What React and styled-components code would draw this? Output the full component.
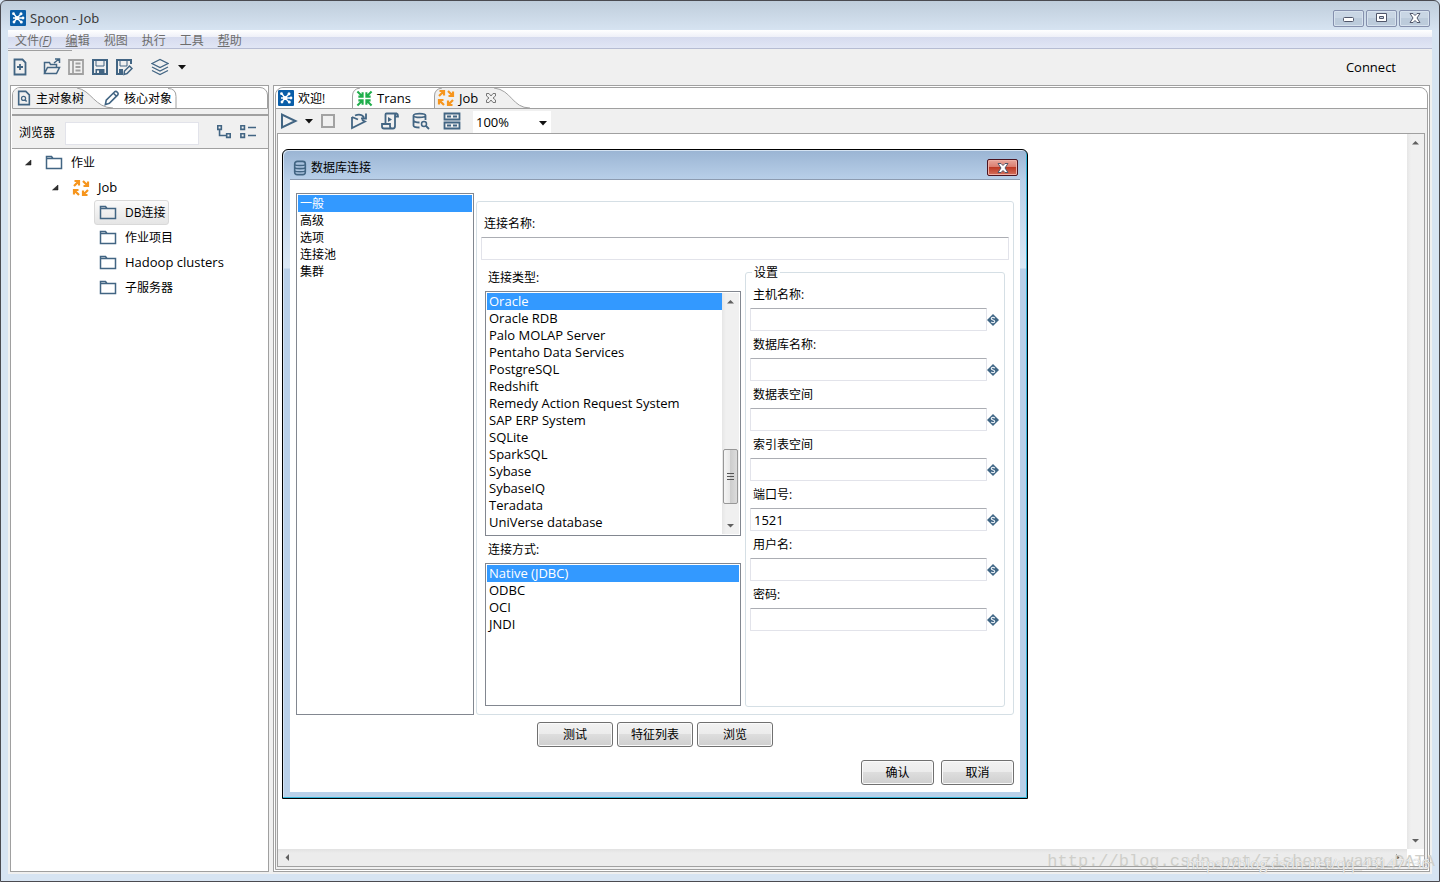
import { useState } from "react"
import styled, { createGlobalStyle, css } from "styled-components"

const GlobalStyle = createGlobalStyle`
    * {
        box-sizing: border-box;
    }

    body {
        margin: 0;
        font-family: "Open Sans", "Noto Sans CJK SC", sans-serif;
        font-size: 12px;
        line-height: 17px;
        color: #000;
        background: #d7e4f2;
    }

    button, input, select {
        font: inherit;
        color: inherit;
    }

    svg {
        display: block;
        flex: none;
    }
`

/* ---------- main window ---------- */

const Window = styled.div`
    position: relative;
    display: flex;
    flex-direction: column;
    min-height: 100vh;
    padding: 0 7px 7px;
    border: 1px solid #4a4a50;
    border-radius: 6px 6px 0 0;
    background: linear-gradient(#bfcddb, #d7e4f2 30px);
    overflow: hidden;
`

const TitleBar = styled.header`
    display: flex;
    align-items: center;
    gap: 4px;
    height: 29px;
    padding: 5px 2px 0;
    color: #3c3c3c;
`

const TitleText = styled.h1`
    flex: 1;
    margin: 0;
    font-family: "Noto Sans", sans-serif;
    font-size: 13px;
    font-weight: normal;
`

const WindowButtons = styled.div`
    display: flex;
    gap: 2px;
`

const WindowButton = styled.button`
    display: flex;
    align-items: center;
    justify-content: center;
    width: 31px;
    height: 17px;
    padding: 0;
    border: 1px solid #8590ad;
    border-radius: 2px;
    background: linear-gradient(#c9d6e4 50%, #bccbdb 50%);
    box-shadow: inset 0 0 0 1px #d7e2ee;
`

const MenuBar = styled.nav`
    display: flex;
    gap: 14px;
    height: 19px;
    padding: 2px 7px 0;
    border-bottom: 1px solid #b6bcd2;
    background: linear-gradient(#fff, #eef0f8 7px, #d6dbee 7px, #e1e6f5);
`

const MenuLink = styled.a`
    color: #6d6d6d;
    text-decoration: none;
`

const Body = styled.div`
    flex: 1;
    display: flex;
    flex-direction: column;
    padding: 0 2px 2px;
    background: #f0f0f0;
`

const Toolbar = styled.div`
    display: flex;
    align-items: center;
    height: 36px;
    margin-left: -2px;
    background: linear-gradient(#a0a0a0, #a0a0a0) 0 1px / 64px 1px no-repeat;
`

const ToolButton = styled.button`
    display: flex;
    align-items: center;
    justify-content: center;
    width: ${props => props.$width || 24}px;
    height: 24px;
    margin: 0 0 0 ${props => props.$space || 0}px;
    padding: 0;
    border: none;
    background: none;
`

const ConnectLink = styled.a`
    margin-left: auto;
    margin-right: 34px;
    font-size: 13px;
    color: #000;
    text-decoration: none;
`

const Main = styled.main`
    flex: 1;
    display: flex;
    gap: 4px;
`

/* ---------- tab folders ---------- */

const Panel = styled.section`
    display: flex;
    flex-direction: column;
    border: 1px solid #a0a0a0;
    background: #fff;
    ${props => props.$side ? css`
        flex: none;
        width: 259px;
    ` : css`
        flex: 1;
        min-width: 0;
        padding: 1px;
    `}
`

const Folder = styled.div`
    flex: 1;
    display: flex;
    flex-direction: column;
    padding: 0 2px 2px 1px;
    border: 1px solid #a0a0a0;
    border-radius: 8px 8px 0 0;
    background: #f0f0f0;
`

const TabStrip = styled.div`
    position: relative;
    display: flex;
    height: 21px;
    background: #fff;
    border-bottom: 1px solid #a0a0a0;
    overflow: hidden;
    ${props => props.$side ? css`
        height: 22px;
        margin: 1px 0 0 1px;
        border: 1px solid #a0a0a0;
        border-radius: 8px 8px 0 0;
    ` : css`
        margin: 0 -2px 0 -1px;
        border-radius: 8px 8px 0 0;
    `}
`

const Tab = styled.button`
    position: relative;
    display: flex;
    align-items: center;
    gap: 4px;
    width: ${props => props.$width}px;
    padding: 0 0 0 ${props => props.$inset || 3}px;
    border: none;
    background: none;
    white-space: nowrap;
    font-size: ${props => props.$latin ? 13 : 12}px;
`

const TabShape = styled.svg`
    position: absolute;
    left: 0;
    top: 0;
`

const TabLabel = styled.span`
    position: relative;
    display: flex;
    align-items: center;
    gap: 4px;
`

/* ---------- object tree ---------- */

const Band = styled.div`
    height: 7px;
    margin-left: 1px;
    border-bottom: 2px solid #a0a0a0;
    background: #f0f0f0;
`

const SearchBar = styled.div`
    display: flex;
    align-items: center;
    height: 33px;
    margin-left: 1px;
    padding-left: 7px;
    border-bottom: 1px solid #a0a0a0;
    background: #f0f0f0;
`

const SearchInput = styled.input`
    width: 134px;
    height: 23px;
    margin: 2px 13px 0 10px;
    padding: 0 4px;
    border: 1px solid #e2e3ea;
    background: #fff;
`

const Tree = styled.ul`
    list-style: none;
    margin: 0;
    padding: 1px 0 0;
`

const TreeRow = styled.li`
    display: flex;
    align-items: center;
    height: 25px;
    padding-left: ${props => 13 + props.$level * 27}px;
`

const TreeArrow = styled.span`
    width: 16px;
`

const TreeItem = styled.button`
    display: flex;
    align-items: center;
    gap: 8px;
    height: 25px;
    padding: 0 3px 0 4px;
    border: 1px solid transparent;
    border-radius: 3px;
    background: none;
    font-size: ${props => props.$latin ? 13 : 12}px;
    ${props => props.$selected && css`
        border-color: #d9d9d9;
        background: linear-gradient(#fafafa, #e5e5e5);
    `}
`

/* ---------- job editor ---------- */

const EditorBar = styled.div`
    display: flex;
    align-items: center;
    height: 24px;
`

const Zoom = styled.div`
    position: relative;
    align-self: flex-end;
    margin-left: 6px;

    svg {
        position: absolute;
        right: 4px;
        top: 10px;
        pointer-events: none;
    }
`

const ZoomSelect = styled.select`
    display: block;
    appearance: none;
    width: 78px;
    height: 22px;
    padding: 0 3px;
    border: none;
    border-radius: 0;
    background: #fff;
    font-size: 13px;
`

const Canvas = styled.div`
    flex: 1;
    display: grid;
    grid-template: 1fr 17px / 1fr 17px;
    border: 1px solid #a0a0a0;
    background: #fff;
`

const ScrollTrack = styled.div`
    display: flex;
    flex-direction: ${props => props.$vertical ? "column" : "row"};
    align-items: center;
    justify-content: space-between;
    padding: ${props => props.$vertical ? "5px 0" : "0 6px"};
    background: ${props => props.$vertical ? "linear-gradient(90deg, #e6e6e6, #f0f0f0 4px)" : "linear-gradient(#e2e2e2, #ececec 4px)"};
`

const Drawing = styled.div`
    min-width: 0;
`

const Watermark = styled.p`
    position: absolute;
    right: ${props => props.$front ? 9 : 4}px;
    bottom: 9px;
    margin: 0;
    white-space: nowrap;
    pointer-events: none;
    ${props => props.$front ? css`
        font-size: 15px;
        line-height: 18px;
        color: rgba(255, 255, 255, 0.8);
        text-shadow: 0 0 1px #999;
    ` : css`
        font-family: "Liberation Mono", monospace;
        font-size: 17px;
        line-height: 20px;
        color: #cfcfca;
    `}
`

/* ---------- database dialog ---------- */

const Dialog = styled.div`
    position: absolute;
    left: 281px;
    top: 148px;
    width: 746px;
    height: 650px;
    display: flex;
    flex-direction: column;
    padding: 0 6px 6px;
    border: 1px solid #000;
    border-radius: 6px 6px 0 0;
    background: linear-gradient(#9ab4d3, #b9d0e9 30px, #dbe8f5 118px, #b9d0e9 119px);
    box-shadow: inset -1px -1px 0 #35b5d9, inset 1px 1px 0 #d5e3f2;
`

const DialogHeader = styled.div`
    display: flex;
    align-items: center;
    gap: 3px;
    height: 29px;
    padding: 6px 3px 0;
`

const DialogTitle = styled.h2`
    flex: 1;
    margin: 0;
    font-size: 12px;
    font-weight: normal;
`

const CloseButton = styled(WindowButton)`
    border-color: #4b1420;
    background: linear-gradient(#e8a79c, #d9796b 50%, #bd3a25 50%, #d4705c);
    box-shadow: inset 0 0 0 1px #eeb0a6;
`

const DialogBody = styled.div`
    flex: 1;
    padding: 13px 6px 6px;
    border-top: 1px solid #8c9bb0;
    margin: 0 1px;
    background: #fff;
`

const Columns = styled.div`
    display: grid;
    grid-template-columns: 178px 1fr;
    gap: 2px;
    height: 522px;
`

const ListFrame = styled.div`
    display: flex;
    min-height: 0;
    height: ${props => props.$height ? props.$height + "px" : "auto"};
    padding: 1px;
    border: 1px solid #828790;
    background: #fff;
`

const List = styled.ul`
    flex: 1;
    list-style: none;
    margin: 0;
    padding: 0;
    font-size: ${props => props.$latin ? 13 : 12}px;
    overflow: hidden;
`

const Option = styled.li`
    height: 17px;
    padding-left: 2px;
    cursor: default;
    ${props => props.$selected && css`
        color: #fff;
        background: #3399ff;
    `}
`

const ListScroll = styled(ScrollTrack)`
    width: 17px;
`

const Thumb = styled.div`
    flex: none;
    display: flex;
    align-items: center;
    justify-content: center;
    width: 15px;
    height: 55px;
    margin-top: 126px;
    border: 1px solid #979797;
    border-radius: 2px;
    background: linear-gradient(90deg, #f5f5f5, #e6e6e6 50%, #cdcdcd 50%, #dcdcdc);
`

const Group = styled.div`
    margin-top: 8px;
    padding: 13px 4px 0;
    border: 1px solid #d5dfe5;
    border-radius: 3px;
`

const FieldLabel = styled.label`
    display: block;
    padding: 0 3px;
`

const TextInput = styled.input`
    display: block;
    width: 100%;
    height: 23px;
    padding: 0 3px;
    border: 1px solid #e2e3ea;
    border-top-color: #abadb3;
    border-radius: 1px;
    background: #fff;
    font-size: 13px;
`

const NameField = styled.div`
    display: grid;
    gap: 5px;
`

const Split = styled.div`
    display: grid;
    grid-template-columns: 256px 260px;
    gap: 4px;
    padding: 9px 4px 0;
`

const Choices = styled.div`
    display: flex;
    flex-direction: column;
    gap: 5px;
`

const Settings = styled.fieldset`
    min-width: 0;
    height: 443px;
    margin: -5px 0 0;
    padding: 5px 5px 0 4px;
    border: 1px solid #d5dfe5;
    border-radius: 3px;
`

const Legend = styled.legend`
    margin-left: 2px;
    padding: 0 2px;
`

const SettingRow = styled.div`
    display: grid;
    gap: 5px;
    height: 50px;
    align-content: start;
`

const VariableField = styled.div`
    display: flex;
    align-items: center;
`

const ButtonRow = styled.div`
    display: flex;
    justify-content: ${props => props.$end ? "flex-end" : "center"};
    gap: ${props => props.$end ? 7 : 4}px;
    margin-top: ${props => props.$end ? 13 : 7}px;
`

const PushButton = styled.button`
    width: ${props => props.$narrow ? 73 : 76}px;
    height: 25px;
    padding: 0;
    border: 1px solid #707070;
    border-radius: 3px;
    background: linear-gradient(#f2f2f2, #ebebeb 50%, #dddddd 50%, #cfcfcf);
    box-shadow: inset 0 0 0 1px #fafafa;
`

/* ---------- icons ---------- */

const BLUE = "#426583"

const Icon = ({ size = 18, color = BLUE, width = 1.8, children }) => (
    <svg width={size} height={size} viewBox="0 0 18 18" fill="none" stroke={color} strokeWidth={width} aria-hidden="true">
        {children}
    </svg>
)

const SpoonIcon = () => (
    <svg width="16" height="16" viewBox="0 0 16 16" aria-hidden="true">
        <rect width="16" height="16" rx="1" fill="#0a5ea8" />
        <g stroke="#fff" strokeWidth="1.4" fill="#fff">
            <path d="M7 8 4 4M7 8l4-4M7 8h6M7 8l4 4M7 8l-3 4M7 8H3" />
            <circle cx="3.5" cy="3.7" r=".7" />
            <circle cx="11" cy="3.8" r=".8" />
            <circle cx="13" cy="8" r=".7" />
            <circle cx="11.3" cy="12" r=".8" />
            <circle cx="4" cy="12" r=".7" />
            <circle cx="7" cy="8" r="1.3" />
        </g>
    </svg>
)

const Caret = () => (
    <svg width="8" height="5" viewBox="0 0 8 5" aria-hidden="true"><path d="M0 0h8L4 4.500z" fill="#111" /></svg>
)

const FolderIcon = () => (
    <Icon width={1.5}><path d="M1.500 14.500v-12h5l1.500 2h8.500v10zM2 4.500h6" /></Icon>
)

const JobIcon = () => (
    <Icon color="#f6951d" width={2.2}>
        <path d="M2 7l5-5M2.500 2H7v4.500M11 2l5 5M16 2.500V7h-4.500M16 11l-5 5M11 11.500V16h4.500M7 16l-5-5M6.500 11H2v4.500" />
    </Icon>
)

const TransIcon = () => (
    <Icon size={17} color="#1fae4b" width={2.2}>
        <path d="M1.500 1.500L7 7M7 2.500V7H2.500M16.500 1.500L11 7M11 2.500V7h4.500M1.500 16.500L7 11M2.500 11H7v4.500M16.500 16.500L11 11M15.500 11H11v4.500" />
    </Icon>
)

const DatabaseIcon = () => (
    <Icon size={16}>
        <rect x="3" y="1.500" width="12" height="15" rx="3" />
        <path d="M3 5.500c2 1 10 1 12 0M3 9c2 1 10 1 12 0M3 12.500c2 1 10 1 12 0" />
    </Icon>
)

const VariableIcon = () => (
    <svg width="12" height="12" viewBox="0 0 12 12" aria-hidden="true">
        <path d="M6 0l6 6-6 6-6-6z" fill="#3f6685" />
        <path d="M7.800 4.300C7 3 4.300 3.200 4.300 4.700S7.700 5.800 7.700 7.400 5 9 4.200 7.800" fill="none" stroke="#e6edf3" strokeWidth="1.200" />
    </svg>
)

const CloseGlyph = () => (
    <svg width="12" height="10" viewBox="0 0 12 10" aria-hidden="true">
        <path d="M1 .5h3l2 2 2-2h3L8 5l3 4.500H8l-2-2-2 2H1L4 5z" fill="#fff" stroke="#50566a" />
    </svg>
)

const Triangle = ({ points }) => (
    <svg width="7" height="7" viewBox="0 0 7 7" aria-hidden="true"><path d={points} fill="#606060" /></svg>
)

const UP = "M0 5.500h7L3.500 2z"
const DOWN = "M0 2h7L3.500 5.500z"
const LEFT = "M5 0v7L1.500 3.500z"
const RIGHT = "M2 0v7l3.500-3.500z"

const Expanded = () => (
    <svg width="8" height="8" viewBox="0 0 8 8" aria-hidden="true"><path d="M7 1v5H1.500z" fill="#333" stroke="#111" strokeWidth=".5" /></svg>
)

/* ---------- data ---------- */

const sections = ["一般", "高级", "选项", "连接池", "集群"]

const databases = [
    "Oracle", "Oracle RDB", "Palo MOLAP Server", "Pentaho Data Services", "PostgreSQL",
    "Redshift", "Remedy Action Request System", "SAP ERP System", "SQLite", "SparkSQL",
    "Sybase", "SybaseIQ", "Teradata", "UniVerse database",
]

const accessTypes = ["Native (JDBC)", "ODBC", "OCI", "JNDI"]

const settings = [
    { id: "host", label: "主机名称:" },
    { id: "database", label: "数据库名称:" },
    { id: "dataSpace", label: "数据表空间" },
    { id: "indexSpace", label: "索引表空间" },
    { id: "port", label: "端口号:", value: "1521" },
    { id: "user", label: "用户名:" },
    { id: "password", label: "密码:", type: "password" },
]

const treeItems = [
    { label: "作业", level: 0, open: true },
    { label: "Job", level: 1, open: true, icon: <JobIcon />, latin: true },
    { label: "DB连接", level: 2 },
    { label: "作业项目", level: 2 },
    { label: "Hadoop clusters", level: 2, latin: true },
    { label: "子服务器", level: 2 },
]

function ListBox({ label, items, latin, height, children }) {
    const [selected, setSelected] = useState(items[0])

    return (
        <ListFrame $height={height}>
            <List role="listbox" aria-label={label} $latin={latin}>
                {items.map(item => (
                    <Option
                        key={item}
                        role="option"
                        aria-selected={item === selected}
                        $selected={item === selected}
                        onClick={() => setSelected(item)}
                    >
                        {item}
                    </Option>
                ))}
            </List>
            {children}
        </ListFrame>
    )
}

function ObjectTree() {
    const [selected, setSelected] = useState("DB连接")

    return (
        <Panel $side>
            <TabStrip $side role="tablist">
                <Tab role="tab" aria-selected="true" $width={88}>
                    <TabShape width="110" height="21">
                        <path d="M0 21V0h64c14 2 18 20 36 20v1z" fill="#f0f0f0" />
                        <path d="M64 0c14 2 18 20 36 20" fill="none" stroke="#a0a0a0" />
                    </TabShape>
                    <TabLabel>
                        <Icon size={16}>
                            <path d="M3 1.500h8l4 4v11H3z" />
                            <circle cx="8.500" cy="9.500" r="2.300" strokeWidth="1.400" /><path d="M10 11l2 2" />
                        </Icon>
                        主对象树
                    </TabLabel>
                </Tab>
                <Tab role="tab" aria-selected="false" $width={76}>
                    <TabShape width="76" height="21">
                        <path d="M67 .5q8 0 8 8V21" fill="none" stroke="#a0a0a0" />
                    </TabShape>
                    <TabLabel>
                        <Icon size={16}><path d="M1.500 16.500l1-5L12 2q1.500-1 3 .5t.5 3L6 15zM11 4l3 3" /></Icon>
                        核心对象
                    </TabLabel>
                </Tab>
            </TabStrip>
            <Band />
            <SearchBar>
                <label htmlFor="browse">浏览器</label>
                <SearchInput id="browse" />
                <ToolButton aria-label="展开">
                    <Icon size={16}><path d="M2 2h4v4H2zM12 11h4v4h-4zM4 6v7h8" /></Icon>
                </ToolButton>
                <ToolButton aria-label="折叠">
                    <Icon size={16}><path d="M1 2h4v4H1zM1 11h4v4H1zM9 4h9M9 13h9" /></Icon>
                </ToolButton>
            </SearchBar>
            <Tree>
                {treeItems.map(item => (
                    <TreeRow key={item.label} $level={item.level}>
                        <TreeArrow>{item.open && <Expanded />}</TreeArrow>
                        <TreeItem
                            $latin={item.latin}
                            $selected={item.label === selected}
                            onClick={() => setSelected(item.label)}
                        >
                            {item.icon || <FolderIcon />}
                            {item.label}
                        </TreeItem>
                    </TreeRow>
                ))}
            </Tree>
        </Panel>
    )
}

function Editor() {
    return (
        <Panel>
            <Folder>
                <TabStrip role="tablist">
                    <Tab role="tab" aria-selected="false" $width={76} $inset={2}>
                        <SpoonIcon />欢迎!
                    </Tab>
                    <Tab role="tab" aria-selected="false" $width={82} $inset={4} $latin>
                        <TabShape width="10" height="21"><path d="M.5 21V8Q.5 1 8 0" fill="none" stroke="#a0a0a0" /></TabShape>
                        <TabLabel><TransIcon />Trans</TabLabel>
                    </Tab>
                    <Tab role="tab" aria-selected="true" $width={96} $inset={3} $latin>
                        <TabShape width="96" height="21">
                            <path d="M0 21V8Q0 0 8 0h52c18 2 18 20 36 20v1z" fill="#f0f0f0" />
                            <path d="M.5 21V8Q.5 1 8 0M60 0c18 2 18 20 36 20" fill="none" stroke="#a0a0a0" />
                        </TabShape>
                        <TabLabel>
                            <JobIcon />Job
                            <Icon size={18} color="#777" width={1}>
                                <path d="M4.500 4.500h2.500l2 2.500 2-2.500h2.500v2.500L11 9l2.500 2v2.500H11L9 11l-2 2.500H4.500V11L7 9 4.500 7z" />
                            </Icon>
                        </TabLabel>
                    </Tab>
                </TabStrip>
                <EditorBar>
                    <ToolButton aria-label="运行"><Icon width={2}><path d="M2 2.500v13L15.500 9z" /></Icon></ToolButton>
                    <ToolButton aria-label="运行选项" $width={16}><Caret /></ToolButton>
                    <ToolButton aria-label="停止" $width={22}><Icon color="#a2a2a2" width={2}><path d="M3 3h12v12H3z" /></Icon></ToolButton>
                    <ToolButton aria-label="重放" $width={31} $space={4}>
                        <Icon><path d="M2 5v11l13-6.500-3-1.500M2 5l6 2.500M5 3.500q6-2.500 9 2M16 1.500v5h-5" /></Icon>
                    </ToolButton>
                    <ToolButton aria-label="SQL" $width={31}>
                        <Icon>
                            <path d="M4.500 11V2.500q0-1 1-1H16q-2 0-2 2V14q0 2.500-2 2.500H3q-2 0-2-2V12h8v2q0 2.500 2 2.500M16 1.500q1 .5 1 3h-3" />
                            <path d="M7 5l4 2.500L7 10z" fill={BLUE} stroke="none" />
                        </Icon>
                    </ToolButton>
                    <ToolButton aria-label="探测数据库" $width={31}>
                        <Icon>
                            <path d="M1.500 3.500c0-2.500 12-2.500 12 0s-12 2.500-12 0v10q0 2 6 2M13.500 3.500V8M1.500 8.500q1 2 6 2" />
                            <circle cx="12" cy="12" r="2.500" strokeWidth="1.500" /><path d="M14 14l3 3" />
                        </Icon>
                    </ToolButton>
                    <ToolButton aria-label="显示结果" $width={31}>
                        <Icon><path d="M1.500 1.500h15v6h-15zM1.500 10.500h15v6h-15zM4 4.500h4M10 4.500h4M4 13.500h4M10 13.500h4" /></Icon>
                    </ToolButton>
                    <Zoom>
                        <ZoomSelect aria-label="缩放" defaultValue="100%">
                            <option>100%</option>
                        </ZoomSelect>
                        <Caret />
                    </Zoom>
                </EditorBar>
                <Canvas>
                    <Drawing />
                    <ScrollTrack $vertical><Triangle points={UP} /><Triangle points={DOWN} /></ScrollTrack>
                    <ScrollTrack><Triangle points={LEFT} /><Triangle points={RIGHT} /></ScrollTrack>
                </Canvas>
            </Folder>
        </Panel>
    )
}

function DatabaseDialog() {
    return (
        <Dialog role="dialog" aria-labelledby="dialog-title">
            <DialogHeader>
                <DatabaseIcon />
                <DialogTitle id="dialog-title">数据库连接</DialogTitle>
                <CloseButton aria-label="关闭"><CloseGlyph /></CloseButton>
            </DialogHeader>
            <DialogBody>
                <Columns>
                    <ListBox label="分类" items={sections} />
                    <Group>
                        <NameField>
                            <FieldLabel htmlFor="name">连接名称:</FieldLabel>
                            <TextInput id="name" />
                        </NameField>
                        <Split>
                            <Choices>
                                <FieldLabel as="span">连接类型:</FieldLabel>
                                <ListBox label="连接类型" items={databases} height={245} latin>
                                    <ListScroll $vertical>
                                        <Triangle points={UP} />
                                        <Thumb>
                                            <svg width="7" height="8" aria-hidden="true"><path d="M0 .5h7M0 3.500h7M0 6.500h7" stroke="#555" /></svg>
                                        </Thumb>
                                        <Triangle points={DOWN} />
                                    </ListScroll>
                                </ListBox>
                                <FieldLabel as="span">连接方式:</FieldLabel>
                                <ListBox label="连接方式" items={accessTypes} height={143} latin />
                            </Choices>
                            <Settings>
                                <Legend>设置</Legend>
                                {settings.map(field => (
                                    <SettingRow key={field.id}>
                                        <FieldLabel htmlFor={field.id}>{field.label}</FieldLabel>
                                        <VariableField>
                                            <TextInput id={field.id} type={field.type || "text"} defaultValue={field.value} />
                                            <VariableIcon />
                                        </VariableField>
                                    </SettingRow>
                                ))}
                            </Settings>
                        </Split>
                    </Group>
                </Columns>
                <ButtonRow>
                    <PushButton>测试</PushButton>
                    <PushButton>特征列表</PushButton>
                    <PushButton>浏览</PushButton>
                </ButtonRow>
                <ButtonRow $end>
                    <PushButton $narrow>确认</PushButton>
                    <PushButton $narrow>取消</PushButton>
                </ButtonRow>
            </DialogBody>
        </Dialog>
    )
}

export default function App() {
    return (
        <>
            <GlobalStyle />
            <Window>
                <TitleBar>
                    <SpoonIcon />
                    <TitleText>Spoon - Job</TitleText>
                    <WindowButtons>
                        <WindowButton aria-label="最小化">
                            <svg width="12" height="10"><rect x=".5" y="4.500" width="10" height="4" rx="1" fill="#fff" stroke="#50566a" /></svg>
                        </WindowButton>
                        <WindowButton aria-label="最大化">
                            <svg width="12" height="10"><path d="M.5.5h10v8H.5zM3.500 3.500h4v2h-4z" fill="#fff" fillRule="evenodd" stroke="#50566a" /></svg>
                        </WindowButton>
                        <WindowButton aria-label="关闭"><CloseGlyph /></WindowButton>
                    </WindowButtons>
                </TitleBar>
                <MenuBar>
                    <MenuLink href="#file">文件<em>(<u>F</u>)</em></MenuLink>
                    <MenuLink href="#edit"><u>编</u>辑</MenuLink>
                    <MenuLink href="#view">视图</MenuLink>
                    <MenuLink href="#run">执行</MenuLink>
                    <MenuLink href="#tools">工具</MenuLink>
                    <MenuLink href="#help"><u>帮</u>助</MenuLink>
                </MenuBar>
                <Body>
                    <Toolbar>
                        <ToolButton aria-label="新建">
                            <Icon><path d="M3.500 1.500h8l3 3v12h-11zM9 6v6M6 9h6" /></Icon>
                        </ToolButton>
                        <ToolButton aria-label="打开" $space={8}>
                            <Icon width={1.5}><path d="M1.500 15.500v-11h5l1 2h6v3M1.500 15.500l3-6h12l-3 6zM11 5l5-4M12 1h4.500v4" /></Icon>
                        </ToolButton>
                        <ToolButton aria-label="资源库">
                            <Icon color="#a0a0a0"><path d="M2 2h14v14H2zM6 2v14M8.500 5.500h5M8.500 9h5M8.500 12.500h5" /></Icon>
                        </ToolButton>
                        <ToolButton aria-label="保存">
                            <Icon width={2}><path d="M2 2h14v14H2z" /><path d="M5 2h8v6H5z" strokeWidth="1" /><path d="M4.500 11h9v5h-9z" fill={BLUE} stroke="none" /><path d="M6 12.500h2V15H6z" fill="#f0f0f0" stroke="none" /></Icon>
                        </ToolButton>
                        <ToolButton aria-label="另存为">
                            <Icon width={2}><path d="M8 16H2V2h14v4" /><path d="M5 2h7v6H5z" strokeWidth="1" /><path d="M4 11h4v5H4z" fill={BLUE} stroke="none" /><path d="M9 16.500l.5-3.500 5-5 2.500 2.500-5 5z" strokeWidth="1.500" /></Icon>
                        </ToolButton>
                        <ToolButton aria-label="透视图" $space={12}>
                            <Icon width={1.3}><path d="M1 5.500L9 1.500l8 4-8 4zM1 9l8 4 8-4M1 12.500l8 4 8-4" /></Icon>
                        </ToolButton>
                        <ToolButton aria-label="选择透视图" $width={20}><Caret /></ToolButton>
                        <ConnectLink href="#connect">Connect</ConnectLink>
                    </Toolbar>
                    <Main>
                        <ObjectTree />
                        <Editor />
                    </Main>
                </Body>
                <DatabaseDialog />
                <Watermark>http://blog.csdn.net/zisheng_wang_DATA</Watermark>
                <Watermark $front>https://blog.csdn.net/qq_43147136</Watermark>
            </Window>
        </>
    )
}
